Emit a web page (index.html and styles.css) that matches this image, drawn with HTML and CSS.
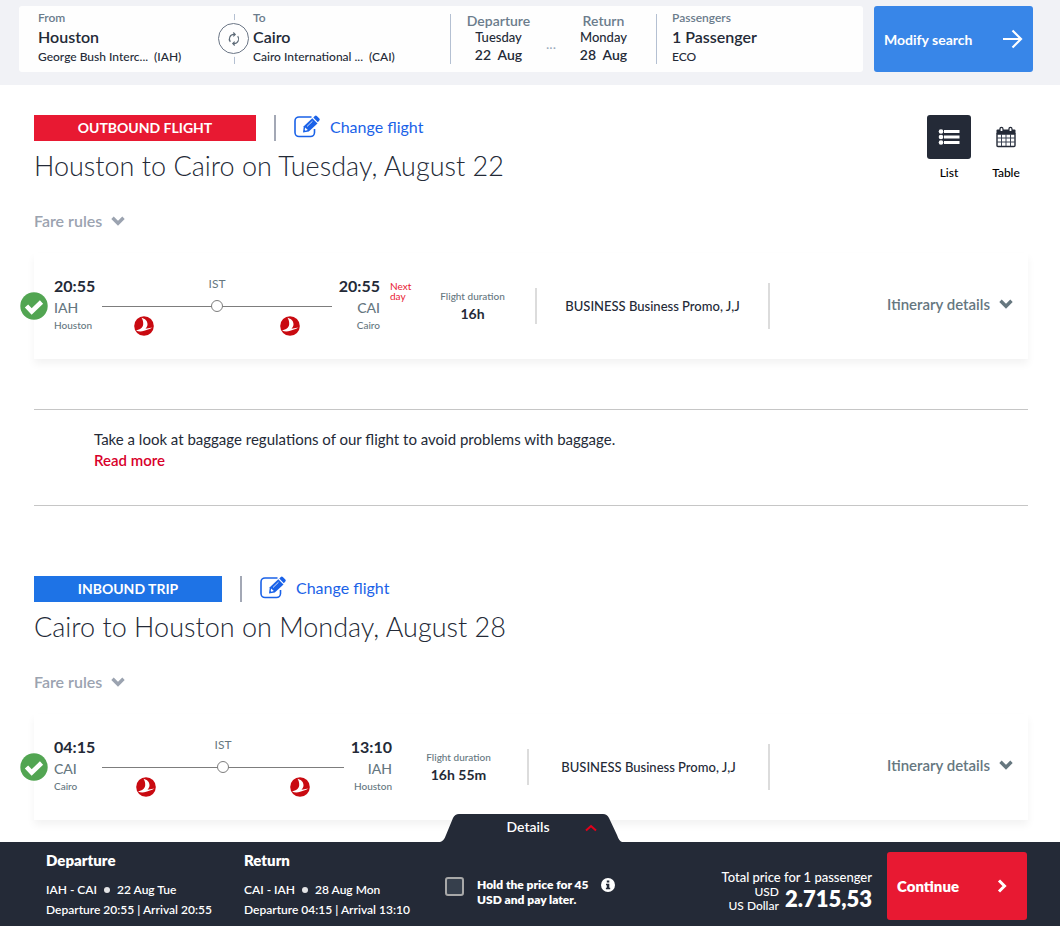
FILE: index.html
```
<!DOCTYPE html>
<html lang="en">
<head>
  <meta charset="UTF-8">
  <title>Your flights</title>
  <meta name="viewport" content="width=device-width, initial-scale=1.0">
  <link rel="stylesheet" href="styles.css">
</head>
<body>
  <!-- shared icons -->
  <svg class="sprite" aria-hidden="true">
    <symbol id="edit" viewBox="0 0 26 24">
      <path d="M17.500 2H5a4 4 0 0 0-4 4v11.500a4 4 0 0 0 4 4h11.500a4 4 0 0 0 4-4V14" fill="none" stroke="currentColor" stroke-width="1.600"/>
      <path d="M9 17.500l.8-6.300L18.300 3.300l5.200 5.200-8.700 8z" fill="currentColor"/>
      <path d="M19.300 2.400l1.500-1.400q1-.8 2 .1l2.500 2.500q.9 1 0 2l-1.500 1.600z" fill="currentColor"/>
      <path d="M11.200 12.500l2.600 2.600-2.400.6-.7-.7z" fill="#fff"/>
      <path d="M13 11.500l5.500-5.300" stroke="#fff" stroke-width=".8"/>
    </symbol>
    <symbol id="down" viewBox="0 0 14 10">
      <path d="M1.500 1.800L7 7.300l5.500-5.500" fill="none" stroke="currentColor" stroke-width="3.400"/>
    </symbol>
    <symbol id="check" viewBox="0 0 28 28">
      <circle cx="14" cy="14" r="13.700" fill="#52a552"/>
      <path d="M6.500 14l5.200 5.500L21.500 10" fill="none" stroke="#fff" stroke-width="4.600"/>
    </symbol>
    <symbol id="airline" viewBox="0 0 20 20">
      <circle cx="10" cy="10" r="9.800" fill="#c90a11"/>
      <path d="M7.500 1.800c3.600.8 6.200 3.400 6 6.800-.1 1.700-.9 3.200-2 4.200l6.900-1.300c-2 1.700-5 2-8.200 3.200-2.800 1-5.800.9-8.200-.2 4.300-.8 6.900-2.800 7.200-6.200.2-2.400-.5-4.700-1.700-6.500z" fill="#fff"/>
    </symbol>
  </svg>

  <header class="search-bar">
    <div class="search-card">
      <div class="search-cell from">
        <span class="search-label">From</span>
        <strong class="search-value">Houston</strong>
        <span class="search-note">George Bush Interc...&nbsp; (IAH)</span>
      </div>
      <div class="search-cell to">
        <button class="swap" aria-label="Swap airports">
          <svg width="14" height="14" viewBox="0 0 14 14" fill="none" stroke="#5e6b78" stroke-width="1.200">
            <path d="M3.300 9.800A4.600 4.600 0 0 1 7 2.400h1M10.700 4.200A4.600 4.600 0 0 1 7 11.600H6"/>
            <path d="M6.300.5l1.900 1.900-1.900 1.900M7.700 9.700l-1.900 1.900 1.900 1.900"/>
          </svg>
        </button>
        <span class="search-label">To</span>
        <strong class="search-value">Cairo</strong>
        <span class="search-note">Cairo International ...&nbsp; (CAI)</span>
      </div>
      <div class="search-dates">
        <div class="date">
          <span class="date-label">Departure</span>
          <span class="date-weekday">Tuesday</span>
          <strong class="date-day">22&nbsp; Aug</strong>
        </div>
        <span class="date-dots">...</span>
        <div class="date">
          <span class="date-label">Return</span>
          <span class="date-weekday">Monday</span>
          <strong class="date-day">28&nbsp; Aug</strong>
        </div>
      </div>
      <div class="search-cell passengers">
        <span class="search-label">Passengers</span>
        <strong class="search-value">1 Passenger</strong>
        <span class="search-note">ECO</span>
      </div>
    </div>
    <button class="modify">
      Modify search
      <svg width="20" height="20" viewBox="0 0 20 20" fill="none" stroke="#fff" stroke-width="2.200">
        <path d="M0 10h18M9.500 1.500L18 10l-8.500 8.500"/>
      </svg>
    </button>
  </header>

  <main>
    <section class="trip">
      <div class="trip-head">
        <div>
          <div class="trip-tags">
            <span class="tag outbound">OUTBOUND FLIGHT</span>
            <a class="change" href="#"><svg width="26" height="24"><use href="#edit"/></svg>Change flight</a>
          </div>
          <h1>Houston to Cairo on Tuesday, August 22</h1>
          <button class="toggle fare-rules">Fare rules <svg width="14" height="10"><use href="#down"/></svg></button>
        </div>
        <div class="views">
          <button class="view active">
            <span class="view-icon">
              <svg width="22" height="18" viewBox="0 0 22 18" fill="#fff">
                <circle cx="3" cy="3.500" r="2.300"/><circle cx="3" cy="9" r="2.300"/><circle cx="3" cy="14.500" r="2.300"/>
                <path d="M6 2h15.500v3H6zM6 7.500h15.500v3H6zM6 13h15.500v3H6z"/>
              </svg>
            </span>
            List
          </button>
          <button class="view">
            <span class="view-icon">
              <svg width="20" height="22" viewBox="0 0 20 22">
                <path d="M1 8h18v11.500q0 1-1 1H2q-1 0-1-1z" fill="#fff" stroke="#242a37" stroke-width="1.400"/>
                <path d="M.5 4.500q0-1 1-1h17q1 0 1 1V8H.5z" fill="#242a37"/>
                <path d="M5.500 8v12M10 8v12M14.500 8v12M1 12h18M1 16h18" stroke="#3b4353"/>
                <path d="M4 5.500V3q0-1.700 1.500-1.700T7 3v2.500zM13 5.500V3q0-1.700 1.500-1.700T16 3v2.500z" fill="#fff" stroke="#242a37" stroke-width="1.200"/>
              </svg>
            </span>
            Table
          </button>
        </div>
      </div>

      <article class="flight">
        <svg class="selected" width="28" height="28"><use href="#check"/></svg>
        <div class="route">
          <div class="stop">
            <strong>20:55</strong><span class="code">IAH</span><span class="city">Houston</span>
          </div>
          <div class="line">
            <span class="via">IST</span>
            <span class="track"><i class="dot"></i></span>
            <span class="airlines"><svg width="20" height="20"><use href="#airline"/></svg><svg width="20" height="20"><use href="#airline"/></svg></span>
          </div>
          <div class="stop arrival">
            <strong>20:55</strong><span class="code">CAI</span><span class="city">Cairo</span>
          </div>
          <span class="next-day">Next day</span>
        </div>
        <div class="duration"><span>Flight duration</span><strong>16h</strong></div>
        <div class="fare">BUSINESS Business Promo, J,J</div>
        <div class="itinerary">
          <button class="toggle">Itinerary details <svg width="14" height="10"><use href="#down"/></svg></button>
        </div>
      </article>
    </section>

    <section class="baggage">
      <p>Take a look at baggage regulations of our flight to avoid problems with baggage.</p>
      <a href="#">Read more</a>
    </section>

    <section class="trip">
      <div class="trip-head">
        <div>
          <div class="trip-tags">
            <span class="tag inbound">INBOUND TRIP</span>
            <a class="change" href="#"><svg width="26" height="24"><use href="#edit"/></svg>Change flight</a>
          </div>
          <h1>Cairo to Houston on Monday, August 28</h1>
          <button class="toggle fare-rules">Fare rules <svg width="14" height="10"><use href="#down"/></svg></button>
        </div>
      </div>

      <article class="flight same-day">
        <svg class="selected" width="28" height="28"><use href="#check"/></svg>
        <div class="route">
          <div class="stop">
            <strong>04:15</strong><span class="code">CAI</span><span class="city">Cairo</span>
          </div>
          <div class="line">
            <span class="via">IST</span>
            <span class="track"><i class="dot"></i></span>
            <span class="airlines"><svg width="20" height="20"><use href="#airline"/></svg><svg width="20" height="20"><use href="#airline"/></svg></span>
          </div>
          <div class="stop arrival">
            <strong>13:10</strong><span class="code">IAH</span><span class="city">Houston</span>
          </div>
        </div>
        <div class="duration"><span>Flight duration</span><strong>16h 55m</strong></div>
        <div class="fare">BUSINESS Business Promo, J,J</div>
        <div class="itinerary">
          <button class="toggle">Itinerary details <svg width="14" height="10"><use href="#down"/></svg></button>
        </div>
      </article>
    </section>
  </main>

  <footer class="summary">
    <button class="details-tab">
      <svg class="tab-shape" width="182" height="28" viewBox="0 0 182 28"><path d="M0 28q4-1 6-7L13 4q2-4 6-4h144q4 0 6 4l8 17q2 6 5 7z" fill="#242a37"/></svg>
      <span>Details</span>
      <svg class="tab-arrow" width="12" height="8" viewBox="0 0 12 8"><path d="M1 6.500l5-4.500 5 4.500" fill="none" stroke="#e3001b" stroke-width="2"/></svg>
    </button>
    <div class="leg">
      <h2>Departure</h2>
      <p>IAH - CAI<i class="bullet"></i>22 Aug Tue</p>
      <p>Departure 20:55 | Arrival 20:55</p>
    </div>
    <div class="leg">
      <h2>Return</h2>
      <p>CAI - IAH<i class="bullet"></i>28 Aug Mon</p>
      <p>Departure 04:15 | Arrival 13:10</p>
    </div>
    <div class="hold">
      <input type="checkbox" id="hold">
      <label for="hold">Hold the price for 45<br>USD and pay later.</label>
      <svg width="14" height="14" viewBox="0 0 14 14"><circle cx="7" cy="7" r="7" fill="#fff"/><path d="M5.800 2.500h2.500v2H5.800zM5 5.800h3.300v4H9.200v1.400H4.900V9.800h.9V7.200H5z" fill="#242a37"/></svg>
    </div>
    <div class="total">
      <span>Total price for 1 passenger</span>
      <div class="price">
        <span class="currency">USD<br>US Dollar</span>
        <strong>2.715,53</strong>
      </div>
    </div>
    <button class="continue">
      Continue
      <svg width="10" height="14" viewBox="0 0 10 14"><path d="M2 1.500L7.500 7 2 12.500" fill="none" stroke="#fff" stroke-width="3"/></svg>
    </button>
  </footer>
</body>
</html>
```
FILE: styles.css
```
* {
  box-sizing: border-box;
}

body {
  margin: 0;
  font-family: Lato, "Open Sans", sans-serif;
  font-size: 14px;
  color: #242a37;
  background: #fff;
}

button {
  font-family: inherit;
  border: none;
  padding: 0;
  background: none;
  cursor: pointer;
}

a {
  text-decoration: none;
}

p, h1, h2 {
  margin: 0;
}

.sprite {
  display: none;
}

/* search bar */
.search-bar {
  display: flex;
  gap: 11px;
  padding: 6px 27px 13px 19px;
  background: #f1f2f6;
}

.search-card {
  flex: 1;
  display: grid;
  grid-template-columns: 215fr 216fr 206fr 207fr;
  height: 66px;
  background: #fefefe;
  border-radius: 3px;
}

.search-cell {
  position: relative;
  display: flex;
  flex-direction: column;
  padding: 3px 0 0 19px;
  line-height: 20px;
}

.search-cell.passengers {
  padding-left: 16px;
}

.search-label {
  font-size: 12px;
  font-weight: 600;
  line-height: 18px;
  color: #6b7c8c;
}

.search-value {
  font-size: 16px;
  font-weight: 600;
}

.search-note {
  font-size: 12px;
  font-weight: 500;
}

.to::before,
.search-dates::before,
.passengers::before {
  content: "";
  position: absolute;
  left: 0;
  top: 8px;
  bottom: 8px;
  border-left: 1px solid #b4c0d2;
}

.swap {
  position: absolute;
  left: -16px;
  top: 17px;
  width: 31px;
  height: 31px;
  display: flex;
  align-items: center;
  justify-content: center;
  background: #fefefe;
  border: 1px solid #6b7686;
  border-radius: 50%;
  box-shadow: 0 0 0 3px #fefefe;
}

.search-dates {
  position: relative;
  display: flex;
  justify-content: center;
  padding: 7px 4px 0 0;
}

.date {
  width: 70px;
  display: flex;
  flex-direction: column;
  align-items: center;
  line-height: 16px;
}

.date-label {
  font-size: 14px;
  font-weight: 600;
  color: #6b7c8c;
}

.date-weekday {
  font-size: 13px;
  font-weight: 500;
}

.date-day {
  font-size: 14px;
  font-weight: 600;
  line-height: 20px;
}

.date-dots {
  width: 35px;
  padding-top: 22px;
  text-align: center;
  color: #9aa9bb;
}

.modify {
  width: 159px;
  display: flex;
  align-items: center;
  justify-content: space-between;
  padding: 0 10px;
  font-size: 14px;
  font-weight: 700;
  color: #fff;
  background: #3886e8;
  border-radius: 3px;
}

/* trips */
main {
  padding: 30px 32px 22px 34px;
}

.trip-head {
  display: flex;
  justify-content: space-between;
}

.trip-tags {
  display: flex;
  align-items: center;
  gap: 18px;
}

.tag {
  width: 222px;
  line-height: 26px;
  text-align: center;
  font-size: 14px;
  font-weight: 700;
  color: #fff;
  background: #e81932;
}

.tag.inbound {
  width: 188px;
  background: #1e73e6;
}

.change {
  display: flex;
  align-items: center;
  gap: 10px;
  height: 26px;
  padding: 0 0 2px 18px;
  border-left: 2px solid #a3a8b5;
  font-size: 16px;
  line-height: 20px;
  color: #1a62e8;
}

h1 {
  margin-top: 8px;
  font-size: 27px;
  font-weight: 300;
  line-height: 34px;
}

.toggle {
  display: flex;
  align-items: center;
  gap: 9px;
  font-size: 15px;
  font-weight: 600;
  line-height: 20px;
  color: #66777f;
}

.fare-rules {
  margin-top: 28px;
  font-size: 16px;
  color: #9ba3b0;
}

.views {
  display: flex;
  gap: 13px;
}

.view {
  display: flex;
  flex-direction: column;
  align-items: center;
  gap: 4px;
  width: 44px;
  font-size: 12px;
  font-weight: 500;
  line-height: 20px;
  color: #000;
  align-self: flex-start;
}

.view-icon {
  width: 44px;
  height: 44px;
  display: flex;
  align-items: center;
  justify-content: center;
  border-radius: 3px;
}

.active .view-icon {
  background: #242a37;
}

.flight {
  position: relative;
  display: flex;
  align-items: center;
  height: 106px;
  margin-top: 22px;
  padding: 0 15px 0 20px;
  box-shadow: 0 5px 8px rgba(0, 0, 0, .05);
}

.selected {
  position: absolute;
  left: -14px;
  top: 39px;
}

.route {
  display: flex;
  width: 358px;
}

.same-day .route {
  width: 338px;
}

.stop {
  display: flex;
  flex-direction: column;
  width: 48px;
}

.arrival {
  align-items: flex-end;
}

.stop strong {
  font-size: 16px;
  font-weight: 700;
  line-height: 20px;
}

.code {
  font-size: 14px;
  line-height: 24px;
  font-weight: 500;
  color: #66777f;
}

.city {
  font-size: 10px;
  line-height: 10px;
  font-weight: 500;
  color: #66777f;
}

.line {
  flex: 1;
  display: flex;
  flex-direction: column;
}

.via {
  margin-bottom: 4px;
  font-size: 12px;
  line-height: 16px;
  text-align: center;
  color: #66777f;
}

.track {
  display: flex;
  justify-content: center;
  align-items: center;
  height: 20px;
  background: linear-gradient(#7d7d7d, #7d7d7d) center / 100% 1px no-repeat;
}

.dot {
  width: 12px;
  height: 12px;
  background: #fff;
  border: 1px solid #7d7d7d;
  border-radius: 50%;
}

.airlines {
  display: flex;
  justify-content: space-between;
  padding: 0 14%;
}

.next-day {
  width: 22px;
  margin: 5px 0 0 10px;
  font-size: 10px;
  line-height: 10px;
  color: #e81932;
}

.duration {
  display: flex;
  flex-direction: column;
  align-items: center;
  justify-content: center;
  width: 125px;
  height: 36px;
  padding-right: 2px;
  border-right: 2px solid #dcdcdc;
}

.same-day .duration {
  width: 137px;
}

.duration span {
  font-size: 10px;
  font-weight: 500;
  line-height: 16px;
  color: #66777f;
}

.duration strong {
  font-size: 14px;
  font-weight: 700;
  line-height: 20px;
}

.fare {
  flex: 1;
  text-align: center;
  font-size: 13px;
  font-weight: 500;
  line-height: 46px;
  border-right: 2px solid #dcdcdc;
}

.itinerary {
  width: 243px;
  display: flex;
  justify-content: flex-end;
  padding-bottom: 4px;
}

.baggage {
  margin: 50px 0 70px;
  padding: 19px 0 34px 60px;
  border-top: 1px solid #c6c6c6;
  border-bottom: 1px solid #c6c6c6;
  font-size: 15px;
  line-height: 21px;
}

.baggage a {
  display: block;
  font-weight: 600;
  color: #d8002b;
}

/* bottom bar */
.summary {
  position: relative;
  display: flex;
  height: 84px;
  padding: 10px 33px 6px 46px;
  color: #fff;
  background: #242a37;
}

.details-tab {
  position: absolute;
  left: 440px;
  top: -28px;
  width: 182px;
  height: 28px;
  padding: 0 6px 3px 0;
  color: #fff;
  font-size: 14px;
  font-weight: 600;
}

.tab-shape {
  position: absolute;
  left: 0;
  top: 0;
}

.details-tab span {
  position: relative;
}

.tab-arrow {
  position: absolute;
  right: 25px;
  top: 10px;
}

.leg {
  width: 198px;
  font-size: 12px;
  font-weight: 600;
  line-height: 20px;
}

.leg h2 {
  margin-bottom: 12px;
  font-size: 15px;
  font-weight: 800;
  line-height: 16px;
}

.bullet {
  display: inline-block;
  width: 6px;
  height: 6px;
  margin: 0 7px 1px;
  background: #e4e4e6;
  border-radius: 50%;
}

.hold {
  display: flex;
  align-items: flex-start;
  padding: 24px 0 0 3px;
  font-size: 12px;
  font-weight: 800;
  line-height: 15px;
}

.hold input {
  appearance: none;
  width: 19px;
  height: 19px;
  margin: 1px 13px 0 0;
  background: #363f4c;
  border: 2px solid #a8a8a8;
  border-radius: 3px;
}

.hold label {
  padding-top: 1px;
}

.hold svg {
  margin: 2px 0 0 12px;
}

.total {
  margin-left: auto;
  padding-top: 17px;
  text-align: right;
  font-size: 13px;
  font-weight: 500;
  line-height: 16px;
}

.price {
  display: flex;
  justify-content: flex-end;
  align-items: center;
  gap: 6px;
}

.currency {
  font-size: 12px;
  line-height: 14px;
}

.price strong {
  font-size: 22px;
  font-weight: 800;
  line-height: 28px;
}

.continue {
  width: 140px;
  height: 68px;
  margin-left: 15px;
  display: flex;
  align-items: center;
  justify-content: space-between;
  padding: 0 20px 0 10px;
  font-size: 15px;
  font-weight: 800;
  color: #fff;
  background: #e81932;
  border-radius: 3px;
}
```
